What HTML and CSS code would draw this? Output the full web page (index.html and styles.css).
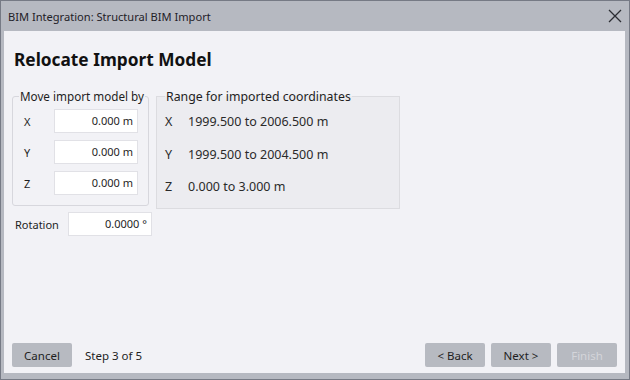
FILE: index.html
```html
<html>
    <head>
        <title>BIM Integration</title>
        <link rel="stylesheet" href="styles.css">
    </head>
    <body>
        <div class="window">
            <div class="titlebar">
                <span>BIM Integration: Structural BIM Import</span>
                <svg class="close" width="14" height="14" viewBox="0 0 14 14">
                    <path d="M1 1 L13 13 M13 1 L1 13" stroke="#2b2d33" stroke-width="1.3" fill="none"/>
                </svg>
            </div>
            <div class="content">
                <h1>Relocate Import Model</h1>
                <div class="panels">
                    <div class="leftcol">
                        <fieldset class="movebox">
                            <legend>Move import model by</legend>
                            <div class="field"><span>X</span><div class="input">0.000 m</div></div>
                            <div class="field"><span>Y</span><div class="input">0.000 m</div></div>
                            <div class="field"><span>Z</span><div class="input">0.000 m</div></div>
                        </fieldset>
                        <div class="rotation">
                            <span>Rotation</span>
                            <div class="input">0.0000 °</div>
                        </div>
                    </div>
                    <fieldset class="rangebox">
                        <legend>Range for imported coordinates</legend>
                        <div class="range"><span>X</span>1999.500 to 2006.500 m</div>
                        <div class="range"><span>Y</span>1999.500 to 2004.500 m</div>
                        <div class="range"><span>Z</span>0.000 to 3.000 m</div>
                    </fieldset>
                </div>
                <div class="footer">
                    <button>Cancel</button>
                    <span class="step">Step 3 of 5</span>
                    <div class="spacer"></div>
                    <button>&lt; Back</button>
                    <button>Next &gt;</button>
                    <button class="disabled">Finish</button>
                </div>
            </div>
        </div>
    </body>
</html>
```

FILE: styles.css
```css
/* Page */
body {
    margin: 0;
    font-family: "Noto Sans", "Open Sans", sans-serif;
    font-size: 11px;
    color: #1e1e1e;
}

/* Window frame */
.window {
    width: 630px;
    height: 380px;
    box-sizing: border-box;
    border: 1px solid #767a85;
    background-color: #b6b9c1;
    display: flex;
    flex-direction: column;
    padding: 0 4px 6px 3px;
}

/* Title bar */
.titlebar {
    height: 30px;
    display: flex;
    align-items: center;
    justify-content: space-between;
    padding-left: 4px;
    padding-right: 2px;
    color: #1f2128;
    font-size: 11.1px;
}

.close {
    margin-right: 1px;
}

/* Content area */
.content {
    flex: 1;
    background-color: #f2f2f6;
    display: flex;
    flex-direction: column;
    padding: 0 8px 6px 8px;
}

h1 {
    font-size: 17.3px;
    font-weight: bold;
    margin: 16px 0 0 2px;
    line-height: 26px;
    color: #111;
}

.panels {
    display: flex;
    align-items: flex-start;
    margin-top: 15px;
}

.leftcol {
    width: 144px;
    flex-shrink: 0;
}

/* Move group box */
.movebox {
    width: 137px;
    min-width: 0;
    height: 118px;
    box-sizing: border-box;
    margin: 0;
    border: 1px solid #d7d7dd;
    border-radius: 3px;
    padding: 5px 10px 0 11px;
}

legend {
    padding: 0 1px;
    white-space: nowrap;
    color: #1e1e1e;
}

.movebox legend {
    margin-left: -5px;
    font-size: 11.7px;
}

.field {
    display: flex;
    align-items: center;
    justify-content: space-between;
    margin-bottom: 7px;
}

.field:last-child {
    margin-bottom: 0;
}

.input {
    background-color: #fff;
    border: 1px solid #e1e1e6;
    height: 22px;
    line-height: 22px;
    text-align: right;
    padding-right: 4px;
    box-sizing: content-box;
}

.field .input {
    width: 78px;
}

/* Rotation row */
.rotation {
    display: flex;
    align-items: center;
    margin-top: 6px;
    margin-left: 3px;
}

.rotation .input {
    width: 78px;
    margin-left: 9px;
}

/* Range group box */
.rangebox {
    width: 244px;
    min-width: 0;
    height: 121px;
    box-sizing: border-box;
    margin: 0;
    border: 1px solid #dcdce0;
    background-color: #ececf0;
    padding: 1px 8px 0 8px;
    font-size: 12.5px;
    color: #2a2a2a;
}

.rangebox legend {
    margin-left: 0;
    font-size: 12.3px;
}

.range {
    line-height: 32.5px;
}

.range span {
    display: inline-block;
    width: 23px;
}

/* Footer buttons */
.footer {
    margin-top: auto;
    display: flex;
    align-items: center;
}

.spacer {
    flex: 1;
}

button {
    width: 60px;
    height: 24px;
    border: none;
    border-radius: 2px;
    background-color: #b7bac1;
    font-family: "Noto Sans", "Open Sans", sans-serif;
    font-size: 11.5px;
    color: #1e1e1e;
    margin-left: 6px;
}

.footer button:first-child {
    margin-left: 0;
}

.step {
    margin-left: 13px;
    font-size: 11.5px;
}

button.disabled {
    color: #d4d5da;
}
```
